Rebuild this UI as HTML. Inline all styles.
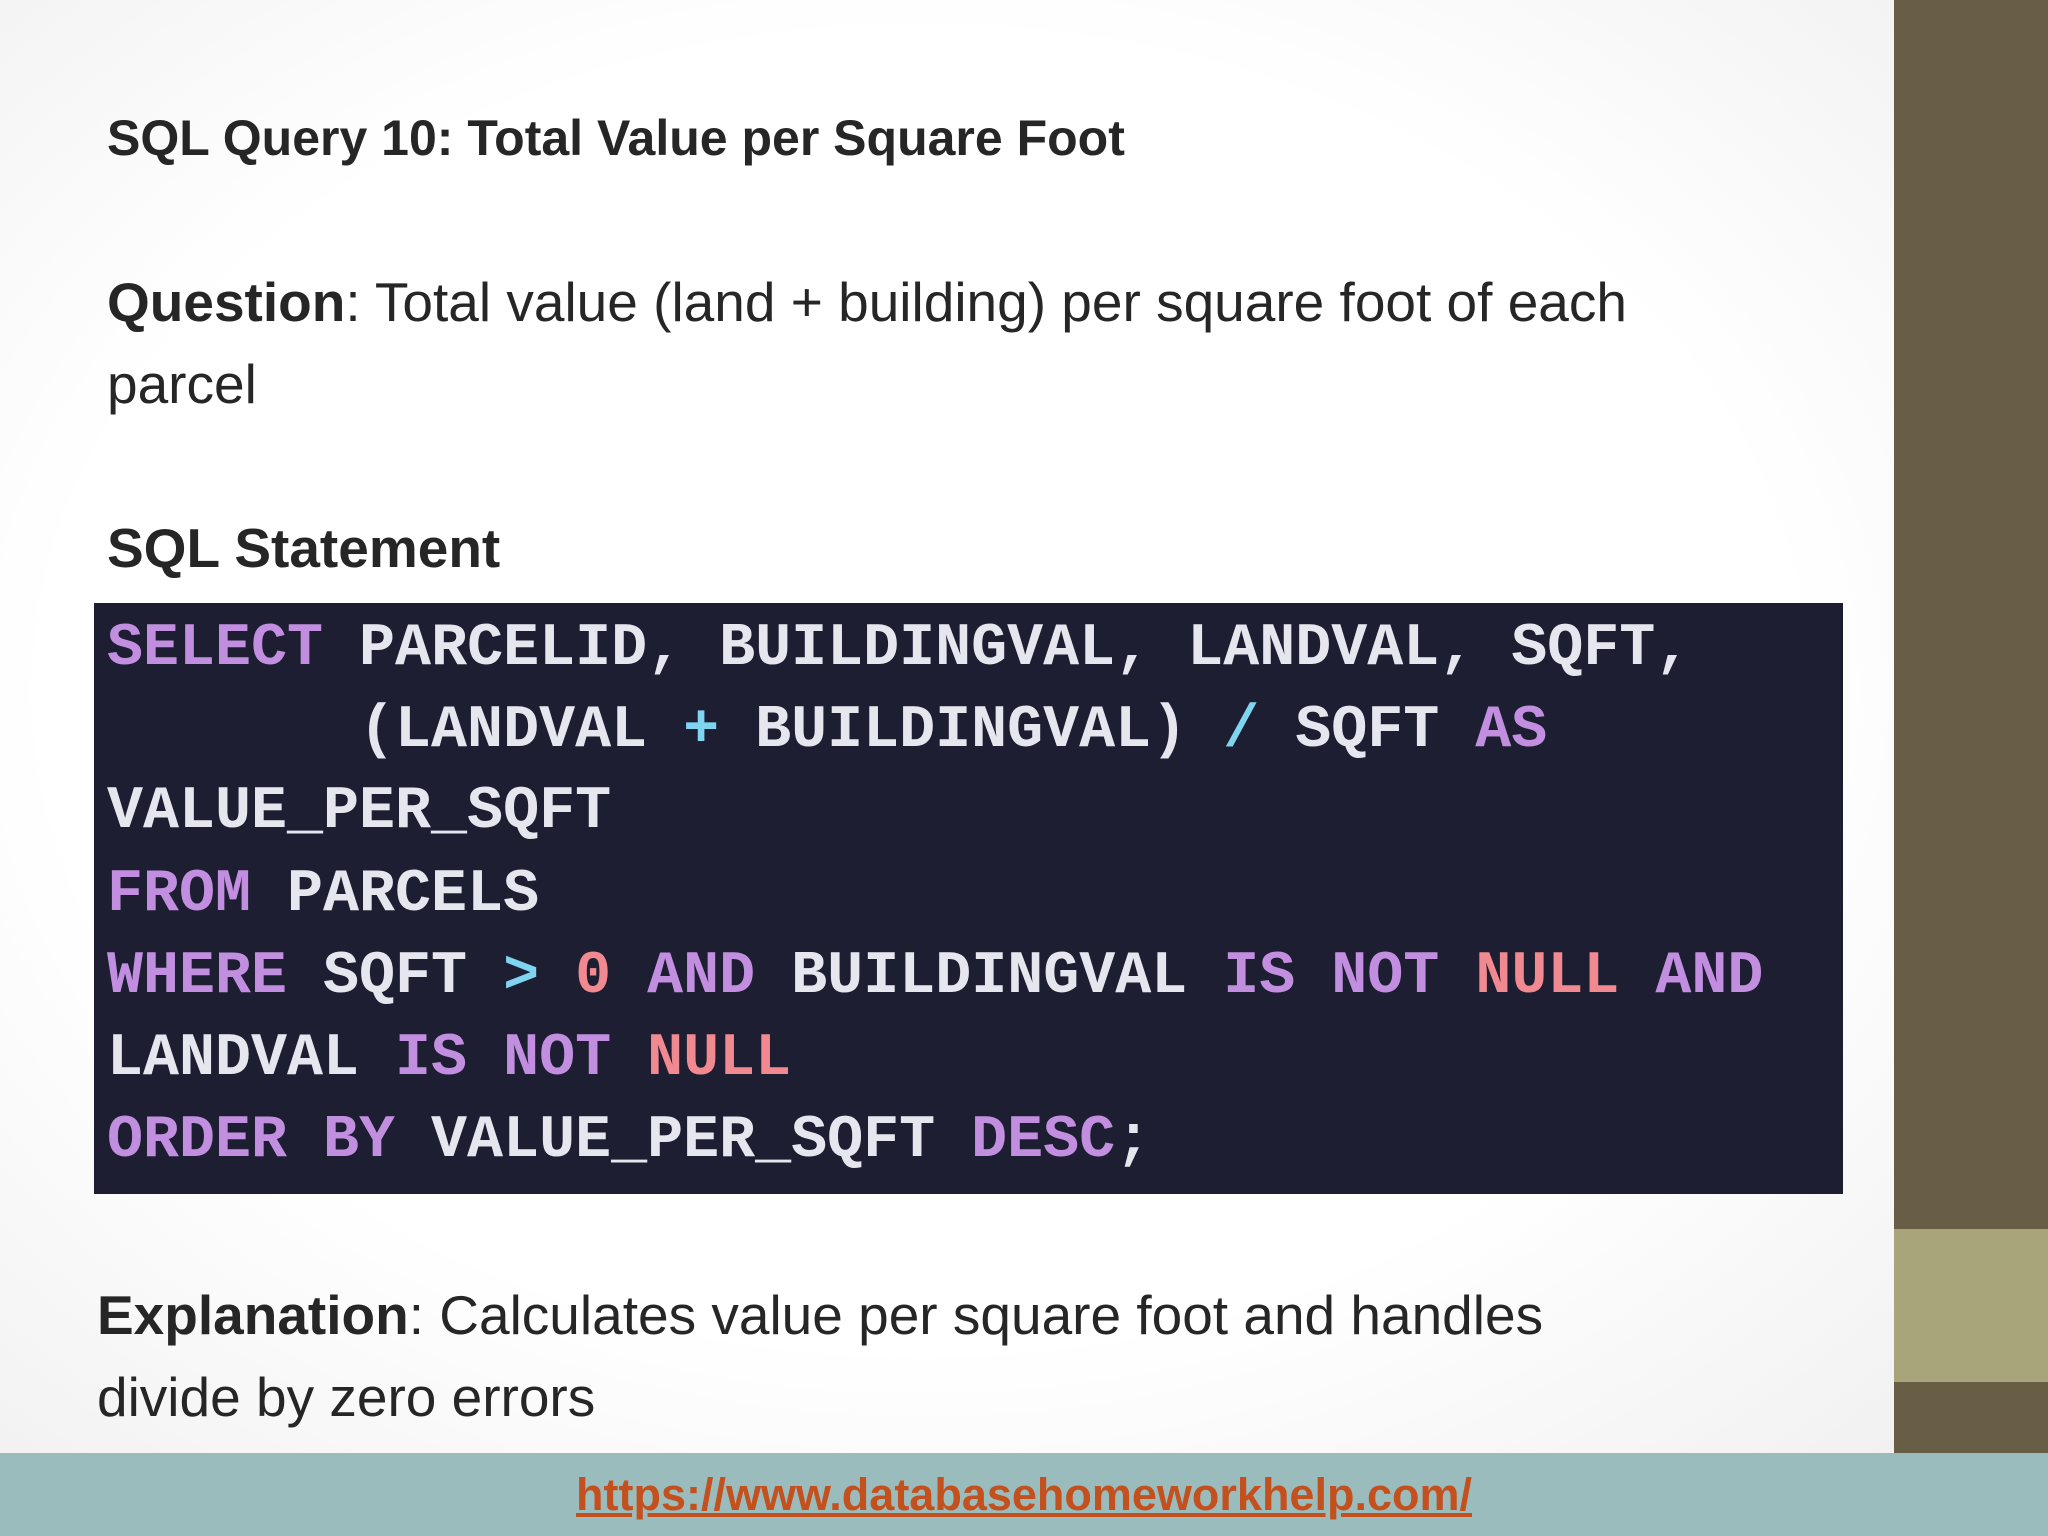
<!DOCTYPE html>
<html><head><meta charset="utf-8"><style>
*{margin:0;padding:0}
body{width:2048px;height:1536px;position:relative;overflow:hidden;background:radial-gradient(ellipse at 45% 45%,#fff 55%,#ececec 100%);font-family:"Liberation Sans",sans-serif;color:#262626}
.a{position:absolute;white-space:nowrap;line-height:82px}
.code{position:absolute;left:94px;top:603px;width:1749px;height:591px;background:#1d1e31}
.cl{position:absolute;left:13px;font-family:"Liberation Mono",monospace;font-size:60px;font-weight:bold;line-height:82px;color:#e6e6ee;white-space:pre}
.k{color:#c28fe0}.o{color:#7fd4f0}.n{color:#f08a90}
</style></head><body>
<div style="position:absolute;left:1894px;top:0;width:154px;height:1536px;background:#675e45"></div>
<div style="position:absolute;left:1894px;top:1229px;width:154px;height:153px;background:#a8a57b"></div>
<div class="a" style="left:107px;top:97px;font-size:50px;font-weight:bold">SQL Query 10: Total Value per Square Foot</div>
<div class="a" style="left:107px;top:261px;font-size:55px"><b>Question</b>: Total value (land + building) per square foot of each<br>parcel</div>
<div class="a" style="left:107px;top:507px;font-size:55px;font-weight:bold">SQL Statement</div>
<div class="code">
<div class="cl" style="top:5px"><span class="k">SELECT</span> PARCELID, BUILDINGVAL, LANDVAL, SQFT,</div>
<div class="cl" style="top:87px">       (LANDVAL <span class="o">+</span> BUILDINGVAL) <span class="o">/</span> SQFT <span class="k">AS</span></div>
<div class="cl" style="top:168px">VALUE_PER_SQFT</div>
<div class="cl" style="top:251px"><span class="k">FROM</span> PARCELS</div>
<div class="cl" style="top:333px"><span class="k">WHERE</span> SQFT <span class="o">&gt;</span> <span class="n">0</span> <span class="k">AND</span> BUILDINGVAL <span class="k">IS NOT</span> <span class="n">NULL</span> <span class="k">AND</span></div>
<div class="cl" style="top:415px">LANDVAL <span class="k">IS NOT</span> <span class="n">NULL</span></div>
<div class="cl" style="top:497px"><span class="k">ORDER BY</span> VALUE_PER_SQFT <span class="k">DESC</span>;</div>
</div>
<div class="a" style="left:97px;top:1274px;font-size:55px"><b>Explanation</b>: Calculates value per square foot and handles<br>divide by zero errors</div>
<div style="position:absolute;left:0;top:1453px;width:2048px;height:83px;background:#9bbcbc"></div>
<div style="position:absolute;left:0;top:1453px;width:2048px;height:83px;line-height:83px;text-align:center;font-size:45px;font-weight:bold;color:#c4501e;text-decoration:underline">https://www.databasehomeworkhelp.com/</div>
</body></html>
